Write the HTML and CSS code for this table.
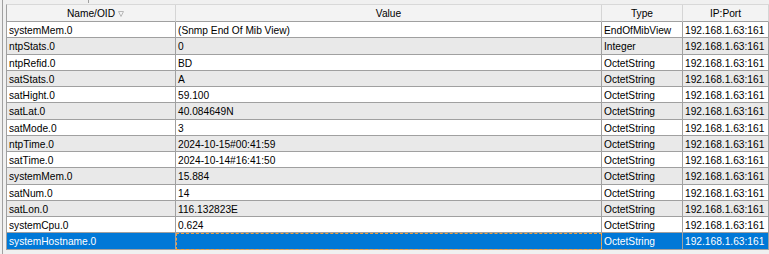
FILE: index.html
```html
<!DOCTYPE html>
<html>
<head>
<meta charset="utf-8">
<link rel="stylesheet" href="styles.css">
</head>
<body>
<div class="frame">
  <div class="strip"><span class="tick"></span></div>
  <div class="table">
    <div class="row head">
      <div class="cell"><span class="hlabel">Name/OID<svg class="sort" width="6" height="6" viewBox="0 0 6 6"><path d="M0.5 0.5 H5.5 L3 5.5 Z" fill="none" stroke="#b8b8b8" stroke-width="1"/></svg></span></div>
      <div class="cell">Value</div>
      <div class="cell">Type</div>
      <div class="cell">IP:Port</div>
    </div>
    <div class="row"><div class="cell">systemMem.0</div><div class="cell">(Snmp End Of Mib View)</div><div class="cell">EndOfMibView</div><div class="cell">192.168.1.63:161</div></div>
    <div class="row alt"><div class="cell">ntpStats.0</div><div class="cell">0</div><div class="cell">Integer</div><div class="cell">192.168.1.63:161</div></div>
    <div class="row"><div class="cell">ntpRefid.0</div><div class="cell">BD</div><div class="cell">OctetString</div><div class="cell">192.168.1.63:161</div></div>
    <div class="row alt"><div class="cell">satStats.0</div><div class="cell">A</div><div class="cell">OctetString</div><div class="cell">192.168.1.63:161</div></div>
    <div class="row"><div class="cell">satHight.0</div><div class="cell">59.100</div><div class="cell">OctetString</div><div class="cell">192.168.1.63:161</div></div>
    <div class="row alt"><div class="cell">satLat.0</div><div class="cell">40.084649N</div><div class="cell">OctetString</div><div class="cell">192.168.1.63:161</div></div>
    <div class="row"><div class="cell">satMode.0</div><div class="cell">3</div><div class="cell">OctetString</div><div class="cell">192.168.1.63:161</div></div>
    <div class="row alt"><div class="cell">ntpTime.0</div><div class="cell">2024-10-15#00:41:59</div><div class="cell">OctetString</div><div class="cell">192.168.1.63:161</div></div>
    <div class="row"><div class="cell">satTime.0</div><div class="cell">2024-10-14#16:41:50</div><div class="cell">OctetString</div><div class="cell">192.168.1.63:161</div></div>
    <div class="row alt"><div class="cell">systemMem.0</div><div class="cell">15.884</div><div class="cell">OctetString</div><div class="cell">192.168.1.63:161</div></div>
    <div class="row"><div class="cell">satNum.0</div><div class="cell">14</div><div class="cell">OctetString</div><div class="cell">192.168.1.63:161</div></div>
    <div class="row alt"><div class="cell">satLon.0</div><div class="cell">116.132823E</div><div class="cell">OctetString</div><div class="cell">192.168.1.63:161</div></div>
    <div class="row"><div class="cell">systemCpu.0</div><div class="cell">0.624</div><div class="cell">OctetString</div><div class="cell">192.168.1.63:161</div></div>
    <div class="row selected"><div class="cell">systemHostname.0</div><div class="cell focus"></div><div class="cell">OctetString</div><div class="cell">192.168.1.63:161</div></div>
  </div>
</div>
</body>
</html>
```
FILE: styles.css
```css
* { box-sizing: border-box; }
html, body {
  margin: 0;
  padding: 0;
  background: #f0f0f0;
  width: 769px;
  height: 254px;
  overflow: hidden;
}
body {
  font-family: "Liberation Sans", Arial, sans-serif;
  font-size: 10.2px;
  color: #000;
}
.frame {
  margin-left: 2px;
  border-left: 1px solid #a0a0a0;
  padding-left: 3px;
  height: 254px;
}
.strip {
  height: 4px;
  display: flex;
}
.tick {
  margin-left: 82px;
  width: 1px;
  height: 3px;
  background: #a0a0a0;
}
.table {
  border-left: 1px solid #a0a0a0;
  border-top: 1px solid #d8d8d8;
  width: 764px;
}
.row {
  display: grid;
  grid-template-columns: 169px 426px 81px 86px;
  height: 16.27px;
  background: #ffffff;
}
.row.alt { background: #e9e9e9; }
.row .cell {
  border-right: 1px solid #a0a0a0;
  border-bottom: 1px solid #a0a0a0;
  padding: 2px 0 0 2px;
  line-height: 13px;
  white-space: nowrap;
  overflow: hidden;
}
.row.head {
  height: 17px;
  background: #f3f3f3;
}
.row.head .cell {
  border-right: 1px solid #d5d5d5;
  border-bottom: 1px solid #a0a0a0;
  text-align: center;
  padding: 2px 0 0 0;
}
.hlabel {
  display: inline-flex;
  align-items: center;
}
.sort {
  margin-left: 3px;
  margin-right: -9px;
}
.row.selected { background: #0078d7; color: #ffffff; }
.row.selected .cell.focus {
  outline: 1px dashed #f0a040;
  outline-offset: -1px;
}
```
